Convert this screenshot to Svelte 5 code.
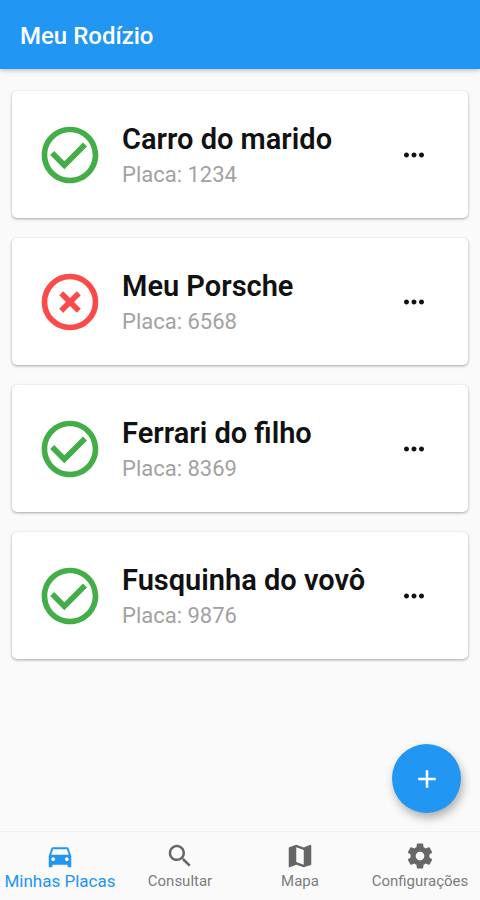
<script lang="ts">
	type Plate = {
		name: string;
		number: string;
		allowed: boolean;
	};

	const plates: Plate[] = [
		{ name: 'Carro do marido', number: '1234', allowed: true },
		{ name: 'Meu Porsche', number: '6568', allowed: false },
		{ name: 'Ferrari do filho', number: '8369', allowed: true },
		{ name: 'Fusquinha do vovô', number: '9876', allowed: true }
	];

	const tabs = [
		{
			id: 'plates',
			label: 'Minhas Placas',
			icon: 'M18.92 6.01C18.72 5.42 18.16 5 17.5 5h-11c-.66 0-1.21.42-1.42 1.01L3 12v8c0 .55.45 1 1 1h1c.55 0 1-.45 1-1v-1h12v1c0 .55.45 1 1 1h1c.55 0 1-.45 1-1v-8l-2.08-5.99zM6.5 16c-.83 0-1.5-.67-1.5-1.5S5.67 13 6.5 13s1.5.67 1.5 1.5S7.33 16 6.5 16zm11 0c-.83 0-1.5-.67-1.5-1.5s.67-1.5 1.5-1.5 1.5.67 1.5 1.5-.67 1.5-1.5 1.5zM5 11l1.5-4.5h11L19 11H5z'
		},
		{
			id: 'search',
			label: 'Consultar',
			icon: 'M15.5 14h-.79l-.28-.27C15.41 12.59 16 11.11 16 9.5 16 5.91 13.09 3 9.5 3S3 5.91 3 9.5 5.91 16 9.5 16c1.61 0 3.09-.59 4.23-1.57l.27.28v.79l5 4.99L20.49 19l-4.99-5zm-6 0C7.01 14 5 11.99 5 9.5S7.01 5 9.5 5 14 7.01 14 9.5 11.99 14 9.5 14z'
		},
		{
			id: 'map',
			label: 'Mapa',
			icon: 'M20.5 3l-.16.03L15 5.1 9 3 3.36 4.9c-.21.07-.36.25-.36.48V20.5c0 .28.22.5.5.5l.16-.03L9 18.9l6 2.1 5.64-1.9c.21-.07.36-.25.36-.48V3.5c0-.28-.22-.5-.5-.5zM15 19l-6-2.11V5l6 2.11V19z'
		},
		{
			id: 'settings',
			label: 'Configurações',
			icon: 'M19.43 12.98c.04-.32.07-.64.07-.98s-.03-.66-.07-.98l2.11-1.65c.19-.15.24-.42.12-.64l-2-3.46c-.12-.22-.39-.3-.61-.22l-2.49 1c-.52-.4-1.08-.73-1.69-.98l-.38-2.65C14.46 2.18 14.25 2 14 2h-4c-.25 0-.46.18-.49.42l-.38 2.65c-.61.25-1.17.59-1.69.98l-2.49-1c-.23-.09-.49 0-.61.22l-2 3.46c-.13.22-.07.49.12.64l2.11 1.65c-.04.32-.07.65-.07.98s.03.66.07.98l-2.11 1.65c-.19.15-.24.42-.12.64l2 3.46c.12.22.39.3.61.22l2.49-1c.52.4 1.08.73 1.69.98l.38 2.65c.03.24.24.42.49.42h4c.25 0 .46-.18.49-.42l.38-2.65c.61-.25 1.17-.59 1.69-.98l2.49 1c.23.09.49 0 .61-.22l2-3.46c.12-.22.07-.49-.12-.64l-2.11-1.65zM12 15.5c-1.93 0-3.5-1.57-3.5-3.5s1.57-3.5 3.5-3.5 3.5 1.57 3.5 3.5-1.57 3.5-3.5 3.5z'
		}
	];

	let activeTab = $state('plates');
</script>

<div class="app">
	<header class="app-bar">
		<h1>Meu Rodízio</h1>
	</header>

	<main>
		<ul class="plates">
			{#each plates as plate}
				<li class="card">
					{#if plate.allowed}
						<svg class="status ok" viewBox="0 0 24 24" role="img" aria-label="Liberado">
							<path d="M16.59 7.58L10 14.17l-3.59-3.58L5 12l5 5 8-8zM12 2C6.48 2 2 6.48 2 12s4.48 10 10 10 10-4.48 10-10S17.52 2 12 2zm0 18c-4.42 0-8-3.58-8-8s3.58-8 8-8 8 3.58 8 8-3.58 8-8 8z" />
						</svg>
					{:else}
						<svg class="status blocked" viewBox="0 0 24 24" role="img" aria-label="Em rodízio">
							<circle cx="12" cy="12" r="9" fill="none" stroke="currentColor" stroke-width="2" />
							<path d="M8.9 8.9l6.2 6.2M15.1 8.9l-6.2 6.2" fill="none" stroke="currentColor" stroke-width="2" />
						</svg>
					{/if}
					<div class="info">
						<h2>{plate.name}</h2>
						<p>Placa: {plate.number}</p>
					</div>
					<button class="more" aria-label="Opções de {plate.name}">
						<svg viewBox="0 0 24 24" aria-hidden="true">
							<path d="M6 10c-1.1 0-2 .9-2 2s.9 2 2 2 2-.9 2-2-.9-2-2-2zm12 0c-1.1 0-2 .9-2 2s.9 2 2 2 2-.9 2-2-.9-2-2-2zm-6 0c-1.1 0-2 .9-2 2s.9 2 2 2 2-.9 2-2-.9-2-2-2z" />
						</svg>
					</button>
				</li>
			{/each}
		</ul>
	</main>

	<div class="bottom">
		<button class="fab" aria-label="Adicionar placa">
			<svg viewBox="0 0 24 24" aria-hidden="true">
				<path d="M19 13h-6v6h-2v-6H5v-2h6V5h2v6h6v2z" />
			</svg>
		</button>

		<nav>
			{#each tabs as tab}
				<button
					class="tab"
					class:active={activeTab === tab.id}
					aria-current={activeTab === tab.id ? 'page' : undefined}
					onclick={() => (activeTab = tab.id)}
				>
					<svg viewBox="0 0 24 24" aria-hidden="true">
						<path d={tab.icon} />
					</svg>
					<span>{tab.label}</span>
				</button>
			{/each}
		</nav>
	</div>
</div>

<style>
	:global(body) {
		margin: 0;
		background: #fafafa;
	}

	.app {
		display: flex;
		flex-direction: column;
		min-height: 100vh;
		background: #fafafa;
		color: #111;
		font-family: Roboto, sans-serif;
	}

	svg {
		display: block;
		fill: currentColor;
	}

	button {
		padding: 0;
		border: 0;
		background: none;
		font-family: inherit;
		cursor: pointer;
	}

	.app-bar {
		padding: 21px 20px 18px;
		background: #2196f3;
		box-shadow: 0 1px 5px rgba(0, 0, 0, 0.3);
		color: #fff;
	}

	h1 {
		margin: 0;
		font-size: 24px;
		font-weight: 500;
		line-height: 30px;
	}

	main {
		flex: 1;
		padding: 22px 12px;
	}

	.plates {
		display: flex;
		flex-direction: column;
		gap: 20px;
		margin: 0;
		padding: 0;
		list-style: none;
	}

	.card {
		display: flex;
		align-items: center;
		gap: 18px;
		padding: 26px 24px;
		border-radius: 5px;
		background: #fff;
		box-shadow: 0 1px 3px rgba(0, 0, 0, 0.35);
	}

	.status {
		flex-shrink: 0;
		width: 68px;
		height: 68px;
	}

	.ok {
		color: #43ad48;
	}

	.blocked {
		color: #fb4a4a;
	}

	.info {
		flex: 1;
		min-width: 0;
		padding-top: 4px;
	}

	h2 {
		margin: 0;
		font-size: 29px;
		font-weight: 600;
		line-height: 36px;
	}

	p {
		margin: 0;
		color: #a2a2a2;
		font-size: 22px;
		line-height: 35px;
	}

	.more {
		padding: 15px 15px 15px 0;
		color: #111;
	}

	.more svg {
		width: 30px;
		height: 30px;
	}

	.bottom {
		position: sticky;
		bottom: 0;
	}

	.fab {
		position: absolute;
		right: 19px;
		bottom: 87px;
		display: grid;
		place-items: center;
		width: 69px;
		height: 69px;
		border-radius: 50%;
		background: #2196f3;
		box-shadow: 2px 5px 10px rgba(0, 0, 0, 0.3);
		color: #fff;
	}

	.fab svg {
		width: 30px;
		height: 30px;
	}

	nav {
		display: grid;
		grid-template-columns: repeat(4, 1fr);
		border-top: 1px solid #f0f0f0;
		background: #fafafa;
	}

	.tab {
		display: flex;
		flex-direction: column;
		align-items: center;
		padding: 9px 0;
		color: #666;
		font-size: 15px;
		line-height: 20px;
		white-space: nowrap;
	}

	.tab svg {
		width: 30px;
		height: 30px;
	}

	.tab span {
		color: #7c7c7c;
	}

	.active {
		color: #2196f3;
		font-size: 17px;
	}

	.active span {
		color: #2196f3;
	}
</style>
